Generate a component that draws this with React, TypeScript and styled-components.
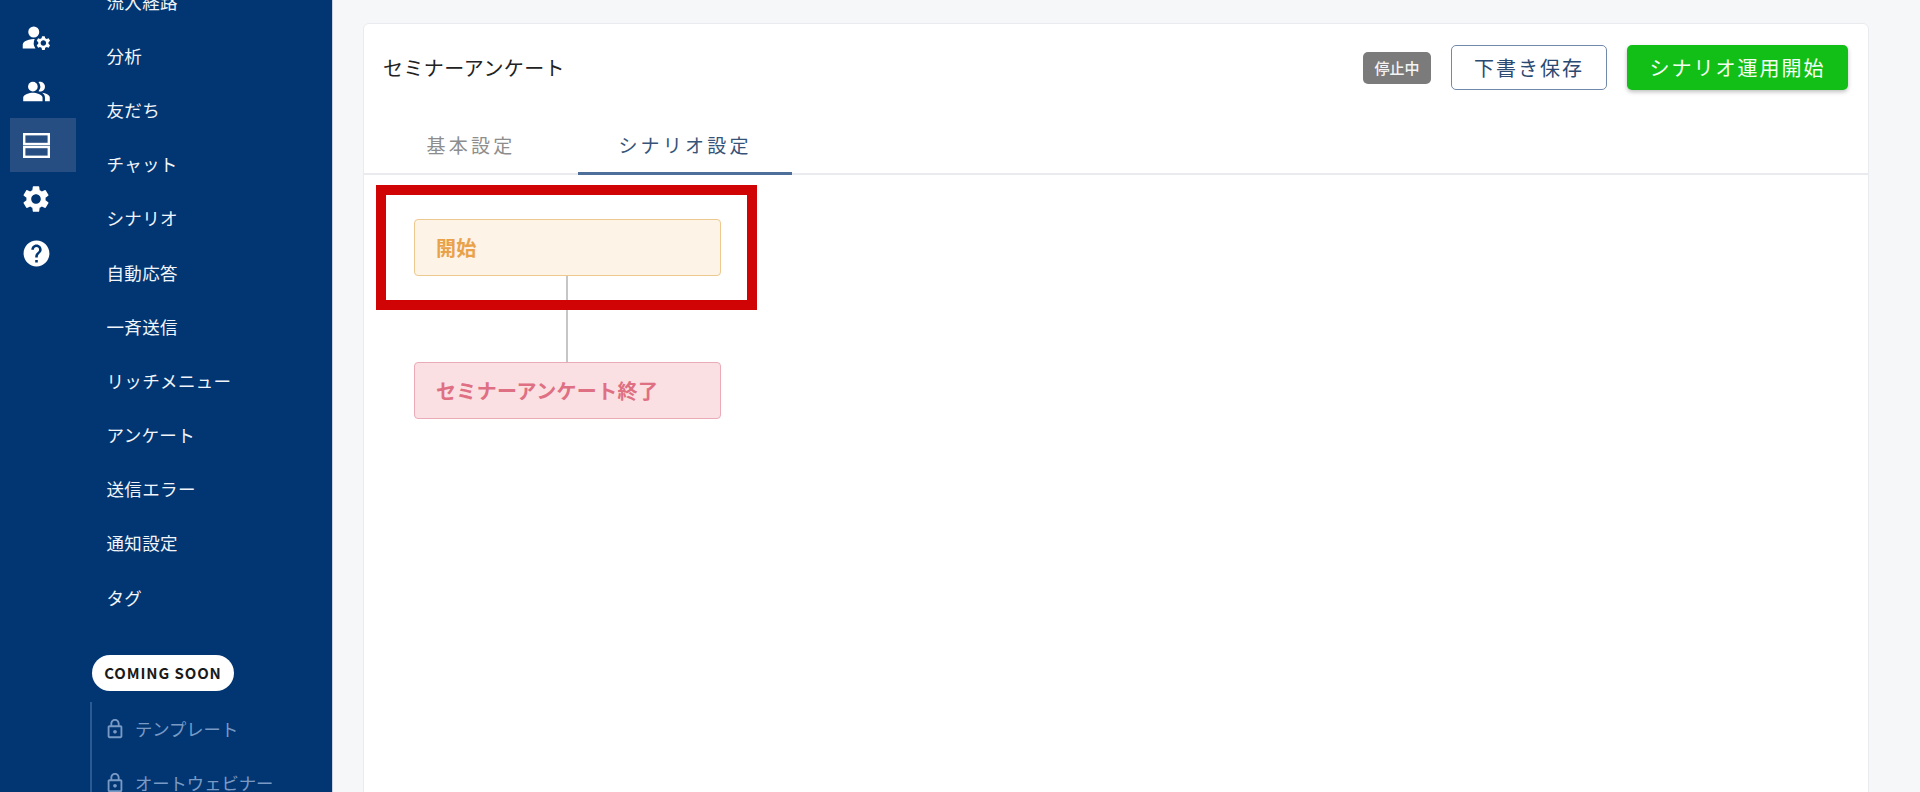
import React from "react";
import styled, { createGlobalStyle } from "styled-components";
import {
  MdManageAccounts,
  MdPeopleAlt,
  MdSettings,
  MdHelp,
  MdOutlineLock,
} from "react-icons/md";

const GlobalStyle = createGlobalStyle`
  html, body {
    margin: 0;
    padding: 0;
    height: 100%;
    overflow: hidden;
    background: #f6f7f9;
    font-family: "Noto Sans CJK JP", "Noto Sans", sans-serif;
  }
  * { box-sizing: border-box; }
`;

const Page = styled.div`
  display: flex;
  width: 1920px;
  height: 792px;
  overflow: hidden;
`;

const Sidebar = styled.aside`
  display: flex;
  flex: 0 0 333px;
  height: 792px;
  overflow: hidden;
  background: #023672;
  border-right: 1px solid #c9d3df;
`;

const Rail = styled.div`
  display: flex;
  flex: 0 0 91px;
  flex-direction: column;
  padding: 10px 0 0 10px;
`;

const RailItem = styled.div<{ $active?: boolean }>`
  display: flex;
  align-items: center;
  justify-content: center;
  width: 66px;
  height: 54px;
  padding-right: 14px;
  color: #fff;
  background: ${(props) => (props.$active ? "#264e83" : "transparent")};
`;

const NavColumn = styled.nav`
  display: flex;
  flex: 1;
  flex-direction: column;
  margin-top: -26px;
`;

const NavItem = styled.div`
  display: flex;
  flex: 0 0 54.2px;
  align-items: center;
  padding-left: 15.5px;
  font-size: 17.5px;
  letter-spacing: 0.35px;
  color: #f1f5fa;
`;

const ComingSoon = styled.div`
  display: flex;
  flex: 0 0 36px;
  align-items: center;
  justify-content: center;
  width: 142px;
  margin: 30.5px 0 0 1px;
  border-radius: 18px;
  background: #fff;
  font-size: 15px;
  font-weight: 700;
  letter-spacing: 0.9px;
  color: #1a1a1a;
`;

const LockedList = styled.div`
  display: flex;
  flex-direction: column;
  margin: 11px 0 0 -1px;
  border-left: 2px solid #2a5b94;
`;

const LockedItem = styled.div`
  display: flex;
  flex: 0 0 54px;
  align-items: center;
  gap: 9px;
  padding-left: 12px;
  font-size: 17.3px;
  white-space: nowrap;
  color: #7a9ac6;
`;

const Main = styled.main`
  display: flex;
  flex: 1;
  padding: 23px 51px 0 30px;
  background: #f6f7f9;
`;

const Card = styled.section`
  display: flex;
  flex: 1;
  flex-direction: column;
  height: 800px;
  border: 1px solid #e9ebee;
  border-radius: 6px;
  background: #fff;
`;

const CardHeader = styled.header`
  display: flex;
  align-items: center;
  justify-content: space-between;
  padding: 21px 20px 0 19px;
`;

const Title = styled.h1`
  margin: 0;
  padding-bottom: 1px;
  font-size: 20px;
  font-weight: 400;
  letter-spacing: 0.4px;
  color: #222;
`;

const Actions = styled.div`
  display: flex;
  align-items: center;
  gap: 20px;
`;

const StatusBadge = styled.span`
  display: flex;
  align-items: center;
  justify-content: center;
  width: 68px;
  height: 32px;
  border-radius: 5px;
  background: #7b7b7b;
  font-size: 15px;
  font-weight: 500;
  color: #f4f4f4;
`;

const Button = styled.button<{ $primary?: boolean }>`
  height: 45px;
  padding: 0;
  border: ${(props) => (props.$primary ? "none" : "1.5px solid #7189ab")};
  border-radius: 5px;
  background: ${(props) => (props.$primary ? "#12bf17" : "#fff")};
  box-shadow: ${(props) =>
    props.$primary ? "0 2px 4px rgba(0, 0, 0, 0.25)" : "none"};
  font-family: inherit;
  font-size: 20px;
  letter-spacing: 2px;
  color: ${(props) => (props.$primary ? "#f4fff4" : "#2b4a72")};
  width: ${(props) => (props.$primary ? "221px" : "156px")};
`;

const Tabs = styled.div`
  display: flex;
  height: 58px;
  margin-top: 27px;
  border-bottom: 2px solid #e9ebee;
`;

const Tab = styled.div<{ $active?: boolean }>`
  display: flex;
  align-items: center;
  justify-content: center;
  width: 214px;
  height: 58px;
  padding-bottom: 1px;
  border-bottom: 3px solid ${(props) => (props.$active ? "#4f6f9b" : "transparent")};
  font-size: 19px;
  letter-spacing: 3.2px;
  color: ${(props) => (props.$active ? "#365479" : "#8d8d8d")};
`;

const Canvas = styled.div`
  position: relative;
  display: flex;
  flex: 1;
  flex-direction: column;
  padding: 44px 0 0 50px;
`;

const FlowNode = styled.div<{ $kind: "start" | "end" }>`
  display: flex;
  align-items: center;
  width: 307px;
  height: 57px;
  padding-left: 21px;
  border: 1px solid ${(props) => (props.$kind === "start" ? "#edc98f" : "#ebabb6")};
  border-radius: 4px;
  background: ${(props) => (props.$kind === "start" ? "#fdf3e6" : "#fbe0e3")};
  font-size: 20px;
  font-weight: 700;
  letter-spacing: 0.35px;
  color: ${(props) => (props.$kind === "start" ? "#e9a24a" : "#df6f82")};
`;

const Connector = styled.div`
  width: 2px;
  height: 86px;
  margin-left: 152px;
  background: #c6c6c6;
`;

const Highlight = styled.div`
  position: absolute;
  top: 10px;
  left: 12px;
  width: 381px;
  height: 125px;
  border: 10px solid #d00404;
  pointer-events: none;
`;

const navItems = [
  "流入経路",
  "分析",
  "友だち",
  "チャット",
  "シナリオ",
  "自動応答",
  "一斉送信",
  "リッチメニュー",
  "アンケート",
  "送信エラー",
  "通知設定",
  "タグ",
];

const lockedItems = ["テンプレート", "オートウェビナー"];

const StackIcon = () => (
  <svg width="27" height="25" viewBox="0 0 27 25" fill="none">
    <rect x="1.2" y="1.2" width="24.6" height="9.8" stroke="#fff" strokeWidth="2.4" />
    <rect x="1.2" y="14" width="24.6" height="9.8" stroke="#fff" strokeWidth="2.4" />
  </svg>
);

const App = () => {
  return (
    <Page>
      <GlobalStyle />
      <Sidebar>
        <Rail>
          <RailItem>
            <MdManageAccounts size={33} />
          </RailItem>
          <RailItem>
            <MdPeopleAlt size={29} />
          </RailItem>
          <RailItem $active>
            <StackIcon />
          </RailItem>
          <RailItem>
            <MdSettings size={32} />
          </RailItem>
          <RailItem>
            <MdHelp size={31} />
          </RailItem>
        </Rail>
        <NavColumn>
          {navItems.map((item) => (
            <NavItem key={item}>{item}</NavItem>
          ))}
          <ComingSoon>COMING SOON</ComingSoon>
          <LockedList>
            {lockedItems.map((item) => (
              <LockedItem key={item}>
                <MdOutlineLock size={22} />
                {item}
              </LockedItem>
            ))}
          </LockedList>
        </NavColumn>
      </Sidebar>
      <Main>
        <Card>
          <CardHeader>
            <Title>セミナーアンケート</Title>
            <Actions>
              <StatusBadge>停止中</StatusBadge>
              <Button>下書き保存</Button>
              <Button $primary>シナリオ運用開始</Button>
            </Actions>
          </CardHeader>
          <Tabs>
            <Tab>基本設定</Tab>
            <Tab $active>シナリオ設定</Tab>
          </Tabs>
          <Canvas>
            <FlowNode $kind="start">開始</FlowNode>
            <Connector />
            <FlowNode $kind="end">セミナーアンケート終了</FlowNode>
            <Highlight />
          </Canvas>
        </Card>
      </Main>
    </Page>
  );
};

export default App;
